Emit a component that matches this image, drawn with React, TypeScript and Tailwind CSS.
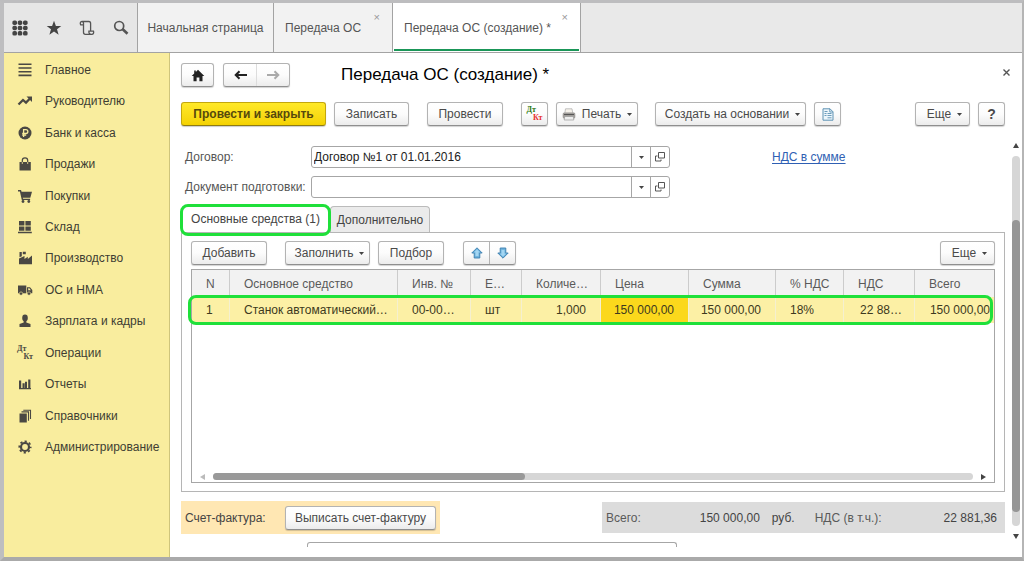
import type { ReactNode } from "react";

const btn =
  "flex h-6 shrink-0 items-center justify-center rounded-[3px] border border-[#b3b3b3] border-b-[#8f8f8f] bg-linear-to-b from-white via-[#fcfcfc] to-[#ececec] text-[#4a4a4a] shadow-[0_1px_1px_rgba(0,0,0,0.18)]";

function Caret() {
  return (
    <svg className="shrink-0" width="5" height="3" viewBox="0 0 5 3" fill="#444">
      <path d="M0 0h5L2.5 3z" />
    </svg>
  );
}

function Svg({ children, w = 16, h = 16 }: { children: ReactNode; w?: number; h?: number }) {
  return (
    <svg width={w} height={h} viewBox={`0 0 ${w} ${h}`} fill="#4a4843" aria-hidden="true">
      {children}
    </svg>
  );
}

function DtKt({ color = false }: { color?: boolean }) {
  return (
    <span className="flex w-4 flex-col font-['Liberation_Serif',serif] text-[8px] leading-[8px] font-bold">
      <span className={color ? "self-start text-[#2c7a12]" : "self-start text-[#4a4843]"}>Дт</span>
      <span className={color ? "self-end text-[#e8322f]" : "self-end text-[#4a4843]"}>Кт</span>
    </span>
  );
}

const sections: { label: string; icon: ReactNode }[] = [
  {
    label: "Главное",
    icon: (
      <Svg>
        <path d="M1.500 1.500h13v1.600h-13zM1.500 5.200h13v1.600h-13zM1.500 8.900h13v1.600h-13zM1.500 12.600h13v1.600h-13z" />
      </Svg>
    ),
  },
  {
    label: "Руководителю",
    icon: (
      <Svg>
        <path d="M1.500 11.500 6 7l3 2.600L13 5.500" fill="none" stroke="#4a4843" strokeWidth="2.300" />
        <path d="M9.500 3.500H15V9z" />
      </Svg>
    ),
  },
  {
    label: "Банк и касса",
    icon: (
      <Svg>
        <circle cx="8" cy="8" r="6.500" />
        <path
          d="M6.600 12V4.600h2.300a1.900 1.900 0 0 1 0 3.900H5.200M5.200 10.200h4"
          fill="none"
          stroke="#f8ec9d"
          strokeWidth="1.300"
        />
      </Svg>
    ),
  },
  {
    label: "Продажи",
    icon: (
      <Svg>
        <path d="M2.500 6h11.300v8.500H2.500z" />
        <path d="M5.300 8V4.500a2.700 2.700 0 0 1 5.400 0V8" fill="none" stroke="#4a4843" strokeWidth="1.200" />
        <path d="M5.300 6v2M10.700 6v2" stroke="#f8ec9d" strokeWidth=".800" />
      </Svg>
    ),
  },
  {
    label: "Покупки",
    icon: (
      <Svg>
        <path d="M1 2h3l.6 1.800H15l-1.700 6H5.800l.3 1h7v1.300H4.800L2.900 3.400H1z" />
        <circle cx="6" cy="13.500" r="1.400" />
        <circle cx="11.800" cy="13.500" r="1.400" />
      </Svg>
    ),
  },
  {
    label: "Склад",
    icon: (
      <Svg>
        <path d="M2 2h5.400v4.500H2zM8.400 2h5.400v4.500H8.400zM2 7.400h5.400v4.300H2zM8.400 7.400h5.400v4.300H8.400zM1 12.700h13.800v1.600H1z" />
      </Svg>
    ),
  },
  {
    label: "Производство",
    icon: (
      <Svg>
        <path d="M2 14.200V8.500L7.500 6v3l3.300-2.200V9L15 5.500v8.700z" />
        <path d="M2.500 2h2.300v4.300l-2.300 1zM5.800 1.800h3v2.500h-3z" />
      </Svg>
    ),
  },
  {
    label: "ОС и НМА",
    icon: (
      <Svg>
        <path d="M1 3.500h8.300v7.800H1z" />
        <path
          fillRule="evenodd"
          d="M10 5.200h3L15.300 8v3.300H10zM11.200 6.300v2h2.700l-1.500-2z"
        />
        <circle cx="4" cy="11.600" r="1.700" stroke="#f8ec9d" strokeWidth=".600" />
        <circle cx="12" cy="11.600" r="1.700" stroke="#f8ec9d" strokeWidth=".600" />
      </Svg>
    ),
  },
  {
    label: "Зарплата и кадры",
    icon: (
      <Svg>
        <ellipse cx="8" cy="5" rx="2.800" ry="3.400" />
        <path d="M6.700 7.500h2.600v2l4.200 1.500v3H2.500v-3l4.200-1.500z" />
      </Svg>
    ),
  },
  { label: "Операции", icon: <DtKt /> },
  {
    label: "Отчеты",
    icon: (
      <Svg>
        <path d="M2 4.500h2.200V12H2zM5.500 7.300h2.200V12H5.500zM8 5.800h2V12H8zM11.200 3.500h2.200V12h-2.200zM2 12h12v1.200H2z" />
      </Svg>
    ),
  },
  {
    label: "Справочники",
    icon: (
      <Svg>
        <path d="M2.500 5.500h7.300v9H2.500z" />
        <path d="M4.500 3.900h7v8.800M6.300 2.200h7.200v8.800" fill="none" stroke="#4a4843" strokeWidth="1.100" />
      </Svg>
    ),
  },
  {
    label: "Администрирование",
    icon: (
      <Svg>
        <circle cx="8" cy="8" r="4" fill="none" stroke="#4a4843" strokeWidth="2.200" />
        <circle
          cx="8"
          cy="8"
          r="5.700"
          fill="none"
          stroke="#4a4843"
          strokeWidth="1.700"
          strokeDasharray="2.240 2.237"
          strokeDashoffset="1.120"
        />
      </Svg>
    ),
  },
];

const columns = [
  { title: "N", width: "w-[38px]" },
  { title: "Основное средство", width: "w-[168px]" },
  { title: "Инв. №", width: "w-[73px]" },
  { title: "Е…", width: "w-[51px]" },
  { title: "Количе…", width: "w-[79px]" },
  { title: "Цена", width: "w-[88px]" },
  { title: "Сумма", width: "w-[87px]" },
  { title: "% НДС", width: "w-[68px]" },
  { title: "НДС", width: "w-[71px]" },
  { title: "Всего", width: "" },
];

const row = [
  { text: "1", cls: "pl-3.5" },
  { text: "Станок автоматический…", cls: "pl-3.5" },
  { text: "00-00…", cls: "pl-3.5" },
  { text: "шт", cls: "pl-3.5" },
  { text: "1,000", cls: "pr-3.5 text-right" },
  { text: "150 000,00", cls: "bg-[#fbd81c] pr-3.5 text-right" },
  { text: "150 000,00", cls: "pr-3.5 text-right" },
  { text: "18%", cls: "pl-3.5" },
  { text: "22 88…", cls: "pl-4" },
  { text: "150 000,00", cls: "pr-1 text-right" },
];

function Field({ id, label, value }: { id: string; label: string; value: string }) {
  return (
    <div className="flex items-center">
      <label htmlFor={id} className="w-[130px] shrink-0 pl-1 whitespace-nowrap text-[#555]">
        {label}
      </label>
      <div className="flex h-[22px] w-[359px] rounded-[3px] border border-[#a6a6a6] bg-white">
        <input id={id} defaultValue={value} className="min-w-0 flex-1 px-0.5 text-[#222] outline-none" />
        <button aria-label="Выбрать" className="flex w-[19px] items-center justify-center border-l border-[#a6a6a6]">
          <Caret />
        </button>
        <button aria-label="Открыть" className="flex w-[19px] items-center justify-center border-l border-[#a6a6a6]">
          <svg width="10" height="10" viewBox="0 0 10 10" fill="none" stroke="#555">
            <path d="M3.500.5h6v5.500h-6zM2.500 4h-2v5h5.500V7.500" />
          </svg>
        </button>
      </div>
    </div>
  );
}

function ArrowIcon({ down = false }: { down?: boolean }) {
  return (
    <svg width="12" height="12" viewBox="0 0 12 12" className={down ? "rotate-180" : ""}>
      <path d="M6 .8 11.200 6H8.800v5H3.200V6H.8z" fill="#6fb4de" stroke="#3a7eae" strokeWidth=".900" strokeLinejoin="round" />
      <path d="M6 2.500 8.800 5.300H7.500V9h-3V5.300H3.200z" fill="#a4d6f2" />
    </svg>
  );
}

export default function App() {
  return (
    <div className="flex min-h-screen flex-col border-t-[3px] border-r-2 border-b-4 border-l-4 border-t-[#bdbdbf] border-r-[#b5b5b5] border-b-[#aaa] border-l-[#bebec0] bg-white font-['Liberation_Sans',Arial,sans-serif] text-xs text-[#444]">
      <header className="flex h-[50px] shrink-0 border-b border-[#a3a3a3] bg-[#e9e9e9]">
        <div className="flex w-[134px] shrink-0 items-center justify-between border-r border-[#a3a3a3] bg-[#e6e6e6] pr-2 pl-2">
          <button aria-label="Разделы">
            <svg width="16" height="16" viewBox="0 0 16 16" fill="#444">
              {[2.7, 8, 13.3].map((y) =>
                [2.7, 8, 13.3].map((x) => <rect key={`${x}-${y}`} x={x - 2.3} y={y - 2.3} width="4.6" height="4.6" rx="1.7" />),
              )}
            </svg>
          </button>
          <button aria-label="Избранное">
            <svg width="16" height="16" viewBox="0 0 16 16" fill="#444">
              <path d="M8 .8 9.900 6h5.400l-4.300 3.300 1.600 5.500L8 11.500l-4.600 3.300L5 9.300.7 6h5.400z" />
            </svg>
          </button>
          <button aria-label="История">
            <svg width="16" height="16" viewBox="0 0 16 16" fill="none" stroke="#555" strokeWidth="1.300">
              <path d="M4.500 4.800H1.700C.9 3.500 1.200 1.500 2.900 1.500h7c1.100 0 1.700.9 1.700 2v7.600h2.900c.5 1.700-.1 3.300-1.700 3.300H6.300c-1.200 0-1.800-.9-1.800-2.100V3.200c0-1-.5-1.700-1.600-1.700M11.600 11.100H9.900c-.2 1.700.5 3.300 2.400 3.300" />
            </svg>
          </button>
          <button aria-label="Поиск">
            <svg width="16" height="16" viewBox="0 0 16 16" fill="none" stroke="#555">
              <circle cx="6.200" cy="6" r="4.500" strokeWidth="1.700" />
              <path d="m9.500 9 5 4.800" strokeWidth="2.600" />
            </svg>
          </button>
        </div>
        <nav className="flex min-w-0 flex-1">
          <a href="#home" className="flex w-[136px] shrink-0 items-center justify-center border-r border-[#a3a3a3] bg-[#f2f2f2] whitespace-nowrap text-[#555]">
            Начальная страница
          </a>
          <div className="relative flex w-[119px] shrink-0 items-center border-r border-[#a3a3a3] bg-[#f2f2f2] pl-[11px] text-[#555]">
            <a href="#transfer">Передача ОС</a>
            <button aria-label="Закрыть вкладку" className="absolute top-2 right-3 text-[11px] leading-3 text-[#999]">×</button>
          </div>
          <div className="relative flex w-[188px] shrink-0 items-center border-r border-[#a3a3a3] bg-white pl-[11px] text-[#555]">
            <a href="#transfer-new">Передача ОС (создание) *</a>
            <button aria-label="Закрыть вкладку" className="absolute top-2 right-3 text-[11px] leading-3 text-[#999]">×</button>
            <span className="absolute inset-x-px bottom-px h-0.5 bg-[#1a9658]" />
          </div>
        </nav>
      </header>

      <div className="flex flex-1">
        <aside className="w-[166px] shrink-0 border-r border-[#cfc57c] bg-[#f9ed9e] pt-px">
          <nav className="grid h-[409px] auto-rows-fr">
            {sections.map((s) => (
              <a key={s.label} href="#section" className="flex items-center gap-3 pl-[13px] whitespace-nowrap text-[#403d33]">
                <span className="flex w-4 shrink-0 justify-center">{s.icon}</span>
                {s.label}
              </a>
            ))}
          </nav>
        </aside>

        <main className="flex min-w-0 flex-1 flex-col pt-[10px] pl-[11px]">
          <div className="flex items-center pr-2">
            <button aria-label="Домой" className={`${btn} w-[33px]`}>
              <svg width="14" height="13" viewBox="0 0 14 13" fill="#222">
                <path d="M7 .8 13.300 7h-1.800v5.200H8.400V8.500H5.600v3.700H2.500V7H.7l2.500-2.500V1.500h1.600v1.400z" />
              </svg>
            </button>
            <div className={`${btn} ml-[9px] w-[67px]`}>
              <button aria-label="Назад" className="flex h-full flex-1 items-center justify-center border-r border-[#ddd]">
                <svg width="13" height="10" viewBox="0 0 13 10" fill="none" stroke="#222" strokeWidth="2">
                  <path d="M1.500 5H13M5.500 1.200 1.700 5l3.800 3.800" />
                </svg>
              </button>
              <button aria-label="Вперед" className="flex h-full flex-1 items-center justify-center">
                <svg width="13" height="10" viewBox="0 0 13 10" fill="none" stroke="#aaa" strokeWidth="2">
                  <path d="M11.500 5H0M7.500 1.200 11.300 5 7.500 8.800" />
                </svg>
              </button>
            </div>
            <h1 className="ml-[51px] flex-1 text-[17px] leading-6 whitespace-nowrap text-black">Передача ОС (создание) *</h1>
            <button aria-label="Закрыть" className="flex h-6 w-4 items-start justify-center pt-1.5">
              <svg width="7" height="7" viewBox="0 0 7 7" stroke="#555" strokeWidth="1.400">
                <path d="m.5.5 6 6m0-6-6 6" />
              </svg>
            </button>
          </div>

          <div className="mt-[15px] flex pr-[17px]">
            <button className="flex h-6 w-[145px] shrink-0 items-center justify-center rounded-[3px] border border-[#c3a70d] border-b-[#8e7b12] bg-linear-to-b from-[#ffe927] to-[#f4d200] font-bold whitespace-nowrap text-[#56490c] shadow-[0_1px_1px_rgba(0,0,0,0.2)]">
              Провести и закрыть
            </button>
            <button className={`${btn} ml-2 w-[75px]`}>Записать</button>
            <button className={`${btn} ml-[18px] w-[76px]`}>Провести</button>
            <button aria-label="Движения документа" className={`${btn} ml-[18px] w-[27px]`}>
              <DtKt color />
            </button>
            <button className={`${btn} ml-2 w-[82px] gap-1.5`}>
              <svg width="14" height="13" viewBox="0 0 14 13">
                <path d="M3.500.8h6.500l.8 4.500H2.800z" fill="#f5f1ea" stroke="#aaa" strokeWidth=".7" />
                <rect x=".7" y="4.500" width="12.600" height="6" rx="1.500" fill="#a09d9a" />
                <path d="M2 6.500h10" stroke="#555" />
                <path d="M2.700 8.500h8.600l.5 3.500H2.200z" fill="#eee" stroke="#999" strokeWidth=".7" />
              </svg>
              <span>Печать</span>
              <Caret />
            </button>
            <button className={`${btn} ml-[17px] w-[151px] gap-1.5 pl-1`}>
              Создать на основании
              <Caret />
            </button>
            <button aria-label="Отчет" className={`${btn} ml-2 w-[27px]`}>
              <svg width="12" height="13" viewBox="0 0 12 13" fill="none" stroke="#5e93b4">
                <path d="M1 .8h7l3 3v8.400H1z" fill="#edf6fb" />
                <path d="M7.800.8v3.200H11M2.500 3.500h3M2.500 5.500h2M5.500 5.500h4M2.500 7.500h2M5.500 7.500h4M5.500 9.800h4" strokeWidth=".9" />
              </svg>
            </button>
            <button className={`${btn} ml-auto w-[55px] gap-1.5 pl-1`}>
              Еще
              <Caret />
            </button>
            <button className={`${btn} ml-2 w-[27px] text-sm font-bold`}>?</button>
          </div>

          <div className="mt-3 flex flex-1">
            <div className="min-w-0 flex-1">
              <div className="flex items-start pt-2">
                <div className="flex flex-col gap-2">
                  <Field id="contract" label="Договор:" value="Договор №1 от 01.01.2016" />
                  <Field id="prep" label="Документ подготовки:" value="" />
                </div>
                <a href="#vat" className="ml-[102px] leading-[22px] whitespace-nowrap text-[#2f5fb3] underline underline-offset-2">
                  НДС в сумме
                </a>
              </div>

              <div role="tablist" className="mt-2 flex items-end">
                <div className="relative flex w-[149px]">
                  <button role="tab" aria-selected="true" className="h-[26px] w-full whitespace-nowrap">
                    Основные средства (1)
                  </button>
                  <span className="pointer-events-none absolute -inset-x-px -top-0.5 -bottom-1 z-10 rounded-lg border-3 border-[#1fe03a] bg-transparent" />
                </div>
                <button role="tab" aria-selected="false" className="h-[26px] w-[100px] rounded-t-sm border border-b-0 border-[#bbb] bg-[#ebebeb]">
                  Дополнительно
                </button>
              </div>

              <section className="border border-[#b5b5b5] px-[9px] pt-2 pb-2">
                <div className="flex">
                  <button className={`${btn} w-[76px]`}>Добавить</button>
                  <button className={`${btn} ml-[18px] w-[85px] gap-1.5 pl-1`}>
                    Заполнить
                    <Caret />
                  </button>
                  <button className={`${btn} ml-2 w-[66px]`}>Подбор</button>
                  <div className={`${btn} ml-[19px] w-[53px]`}>
                    <button aria-label="Вверх" className="flex h-full flex-1 items-center justify-center border-r border-[#b3b3b3]">
                      <ArrowIcon />
                    </button>
                    <button aria-label="Вниз" className="flex h-full flex-1 items-center justify-center">
                      <ArrowIcon down />
                    </button>
                  </div>
                  <button className={`${btn} ml-auto w-[55px] gap-1.5 pl-1`}>
                    Еще
                    <Caret />
                  </button>
                </div>

                <div className="mt-1 flex h-[214px] flex-col border border-[#a6a6a6]">
                  <div className="relative">
                    <table className="w-full table-fixed border-separate border-spacing-0">
                      <thead>
                        <tr className="h-[27px] bg-[#f2f2f2] text-left text-[#5a5a5a]">
                          {columns.map((c) => (
                            <th key={c.title} className={`${c.width} border-r border-[#ccc] py-0 pr-0 pl-3.5 font-normal whitespace-nowrap last:border-r-0`}>
                              {c.title}
                            </th>
                          ))}
                        </tr>
                      </thead>
                      <tbody>
                        <tr className="h-[26px] bg-[#fcf0a5] text-[#3d3920]">
                          {row.map((c, i) => (
                            <td key={i} className={`${c.cls} border-r border-[#f5f0d0] whitespace-nowrap last:border-r-0`}>
                              {c.text}
                            </td>
                          ))}
                        </tr>
                      </tbody>
                    </table>
                    <span className="pointer-events-none absolute right-px -bottom-0.5 -left-1 h-[30px] rounded-lg border-3 border-[#1fe03a]" />
                  </div>
                  <div className="mt-auto mb-0.5 flex h-[7px] items-center gap-2 pr-2 pl-2">
                    <svg width="5" height="6" viewBox="0 0 5 6" fill="#bbb">
                      <path d="M5 0v6L0 3z" />
                    </svg>
                    <div className="h-[7px] flex-1 rounded-full bg-[#d6d6d6]">
                      <div className="h-full w-[41%] rounded-full bg-[#999]" />
                    </div>
                    <svg width="5" height="6" viewBox="0 0 5 6" fill="#444">
                      <path d="M0 0v6l5-3z" />
                    </svg>
                  </div>
                </div>
              </section>

              <div className="mt-[9px] flex items-center justify-between">
                <div className="flex h-[33px] w-[259px] shrink-0 items-center justify-between bg-[#ffe7b3] pr-1 pl-1">
                  <span>Счет-фактура:</span>
                  <button className={`${btn} w-[151px]`}>Выписать счет-фактуру</button>
                </div>
                <div className="flex h-[31px] w-[403px] items-center bg-[#dcdcdc] pr-2 pl-1 whitespace-nowrap">
                  <span className="text-[#5a5a5a]">Всего:</span>
                  <output className="w-[119px] text-right">150 000,00</output>
                  <span className="ml-3">руб.</span>
                  <span className="ml-5 text-[#5a5a5a]">НДС (в т.ч.):</span>
                  <output className="flex-1 text-right">22 881,36</output>
                </div>
              </div>
              <div className="mt-2 ml-[126px] h-[5px] w-[370px] rounded-t-[3px] border border-b-0 border-[#a6a6a6]" />
            </div>

            <div className="ml-[5px] flex w-3 shrink-0 flex-col items-center pt-[5px] pb-[18px]">
              <svg width="6" height="5" viewBox="0 0 6 5" fill="#444">
                <path d="M0 5h6L3 0z" />
              </svg>
              <div className="my-2 flex w-2 flex-1 flex-col rounded-full bg-[#d6d6d6] pt-16 pb-3.5">
                <div className="w-full flex-1 rounded-full bg-[#969696]" />
              </div>
              <svg width="6" height="5" viewBox="0 0 6 5" fill="#444">
                <path d="M0 0h6L3 5z" />
              </svg>
            </div>
          </div>
        </main>
      </div>
    </div>
  );
}
